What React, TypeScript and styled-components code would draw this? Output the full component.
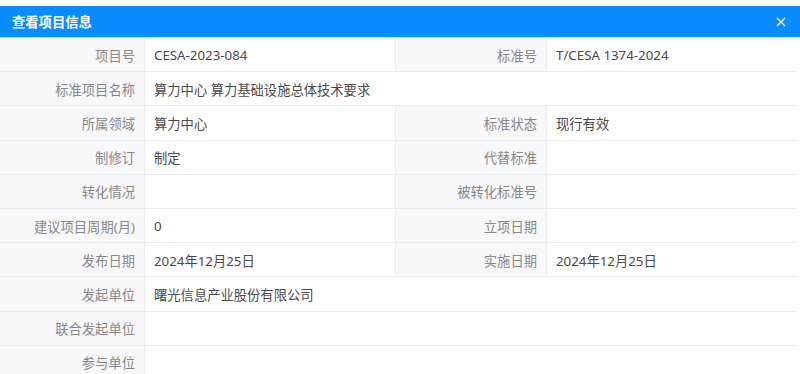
import React from "react";
import styled, { createGlobalStyle } from "styled-components";

const Global = createGlobalStyle`
  html, body { margin: 0; padding: 0; background: #fff; }
  body { font-family: "Noto Sans", "Noto Sans CJK SC", sans-serif; }
`;

const Page = styled.div`
  padding-top: 6px;
  width: 800px;
`;

const Header = styled.div`
  height: 31px;
  background: #0a8cff;
  display: flex;
  align-items: center;
  justify-content: space-between;
  padding: 0 14px 0 12px;
  color: #fff;
`;

const Title = styled.div`
  font-family: "Noto Sans CJK SC", sans-serif;
  font-size: 13.3px;
  font-weight: 700;
`;

const Close = styled.button`
  border: none;
  background: transparent;
  padding: 0;
  display: flex;
  cursor: pointer;
`;

const Table = styled.div`
  width: 796px;
  display: grid;
  grid-template-columns: 145px 251px 151px 249px;
  border-right: 1px solid #eaecf4;
  box-sizing: border-box;
  margin-top: 1px;
`;

const Cell = styled.div<{ $label?: boolean; $span?: number; $last?: boolean }>`
  height: 34.2px;
  box-sizing: border-box;
  display: flex;
  align-items: center;
  justify-content: ${(p) => (p.$label ? "flex-end" : "flex-start")};
  padding: ${(p) => (p.$label ? "1px 9px 0 0" : "1px 0 0 9px")};
  background: ${(p) => (p.$label ? "#f8f8fa" : "#fff")};
  color: ${(p) => (p.$label ? "#878787" : "#4a4a4a")};
  border-bottom: 1px solid #eaecf4;
  border-right: ${(p) => (p.$last ? "none" : "1px solid #eaecf4")};
  font-family: "Noto Sans", "Noto Sans CJK SC", sans-serif;
  font-size: 13.3px;
  white-space: nowrap;
  grid-column: ${(p) => (p.$span ? `span ${p.$span}` : "auto")};
`;

type Row = [string, string, string?, string?];

const rows: Row[] = [
  ["项目号", "CESA-2023-084", "标准号", "T/CESA 1374-2024"],
  ["标准项目名称", "算力中心 算力基础设施总体技术要求"],
  ["所属领域", "算力中心", "标准状态", "现行有效"],
  ["制修订", "制定", "代替标准", ""],
  ["转化情况", "", "被转化标准号", ""],
  ["建议项目周期(月)", "0", "立项日期", ""],
  ["发布日期", "2024年12月25日", "实施日期", "2024年12月25日"],
  ["发起单位", "曙光信息产业股份有限公司"],
  ["联合发起单位", ""],
  ["参与单位", ""],
];

export default function App() {
  return (
    <Page>
      <Global />
      <Header>
        <Title>查看项目信息</Title>
        <Close aria-label="close">
          <svg width="10" height="10" viewBox="0 0 10 10">
            <path d="M1 1L9 9M9 1L1 9" stroke="#fff" strokeWidth="1.3" />
          </svg>
        </Close>
      </Header>
      <Table>
        {rows.map((r, i) =>
          r.length === 4 ? (
            <React.Fragment key={i}>
              <Cell $label>{r[0]}</Cell>
              <Cell>{r[1]}</Cell>
              <Cell $label>{r[2]}</Cell>
              <Cell $last>{r[3]}</Cell>
            </React.Fragment>
          ) : (
            <React.Fragment key={i}>
              <Cell $label>{r[0]}</Cell>
              <Cell $span={3} $last>{r[1]}</Cell>
            </React.Fragment>
          )
        )}
      </Table>
    </Page>
  );
}
